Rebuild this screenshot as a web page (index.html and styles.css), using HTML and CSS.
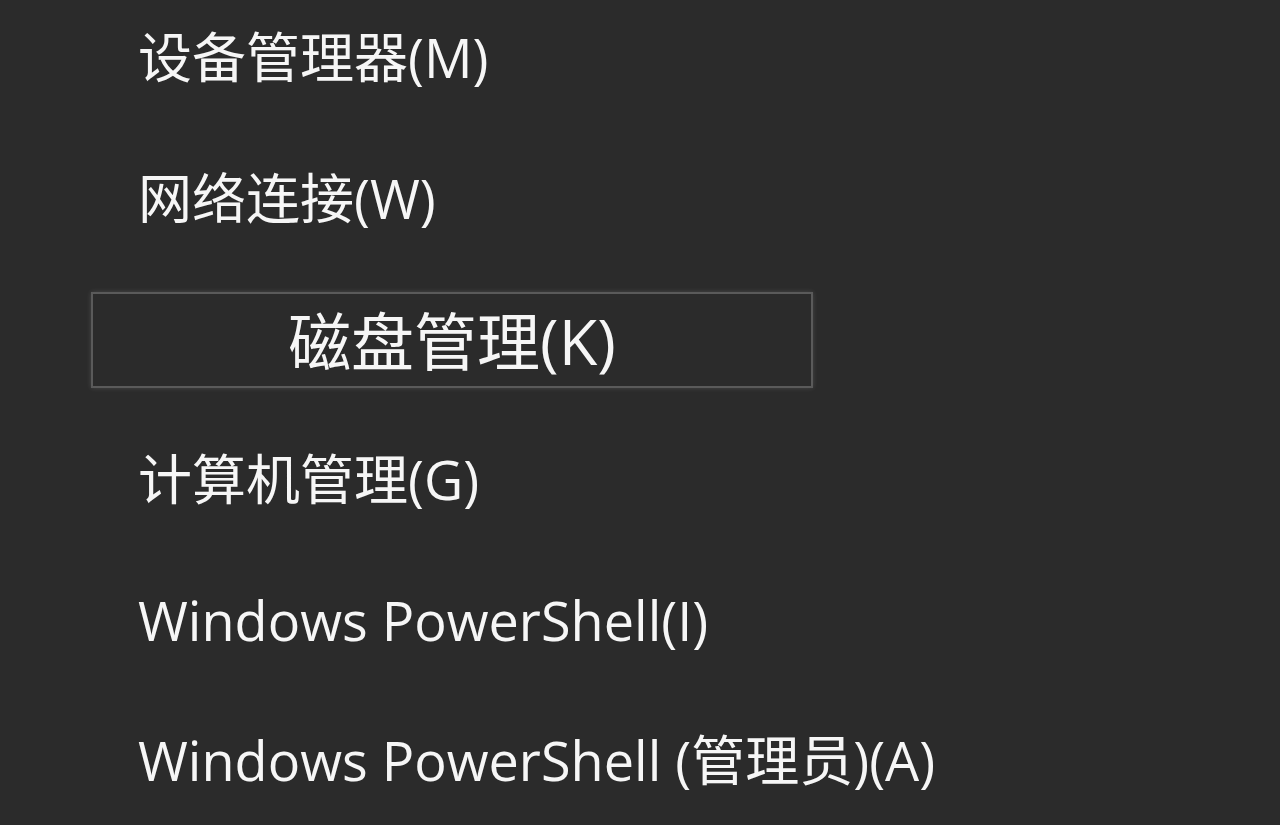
FILE: index.html
```html
<!DOCTYPE html>
<html lang="zh-CN">
<head>
<meta charset="utf-8">
<title>Win+X 菜单</title>
<link rel="stylesheet" href="styles.css">
</head>
<body>
<ul class="menu">
  <li class="item">设备管理器(M)</li>
  <li class="item">网络连接(W)</li>
  <li class="item item-active"><span class="item-box">磁盘管理(K)</span></li>
  <li class="item">计算机管理(G)</li>
  <li class="item">Windows PowerShell(I)</li>
  <li class="item">Windows PowerShell (管理员)(A)</li>
</ul>
</body>
</html>
```
FILE: styles.css
```css
html, body {
  margin: 0;
  padding: 0;
  background: #2b2b2b;
  height: 100%;
  overflow: hidden;
}
body {
  font-family: "Open Sans", "Noto Sans CJK SC", sans-serif;
  color: #f6f6f6;
}
.menu {
  list-style: none;
  margin: -13px 0 0 0;
  padding: 0;
  display: flex;
  flex-direction: column;
}
.item {
  height: 140.6px;
  display: flex;
  align-items: center;
  padding-left: 138px;
  font-size: 54px;
  line-height: 1;
  white-space: nowrap;
}
.item-active {
  padding-left: 91px;
}
.item-box {
  width: 718px;
  height: 92px;
  margin-top: 4px;
  border: 2px solid #5a5a5a;
  box-shadow: 0 0 5px rgba(255, 255, 255, 0.14);
  display: flex;
  align-items: center;
  justify-content: center;
  font-size: 63px;
  box-sizing: content-box;
}
```
